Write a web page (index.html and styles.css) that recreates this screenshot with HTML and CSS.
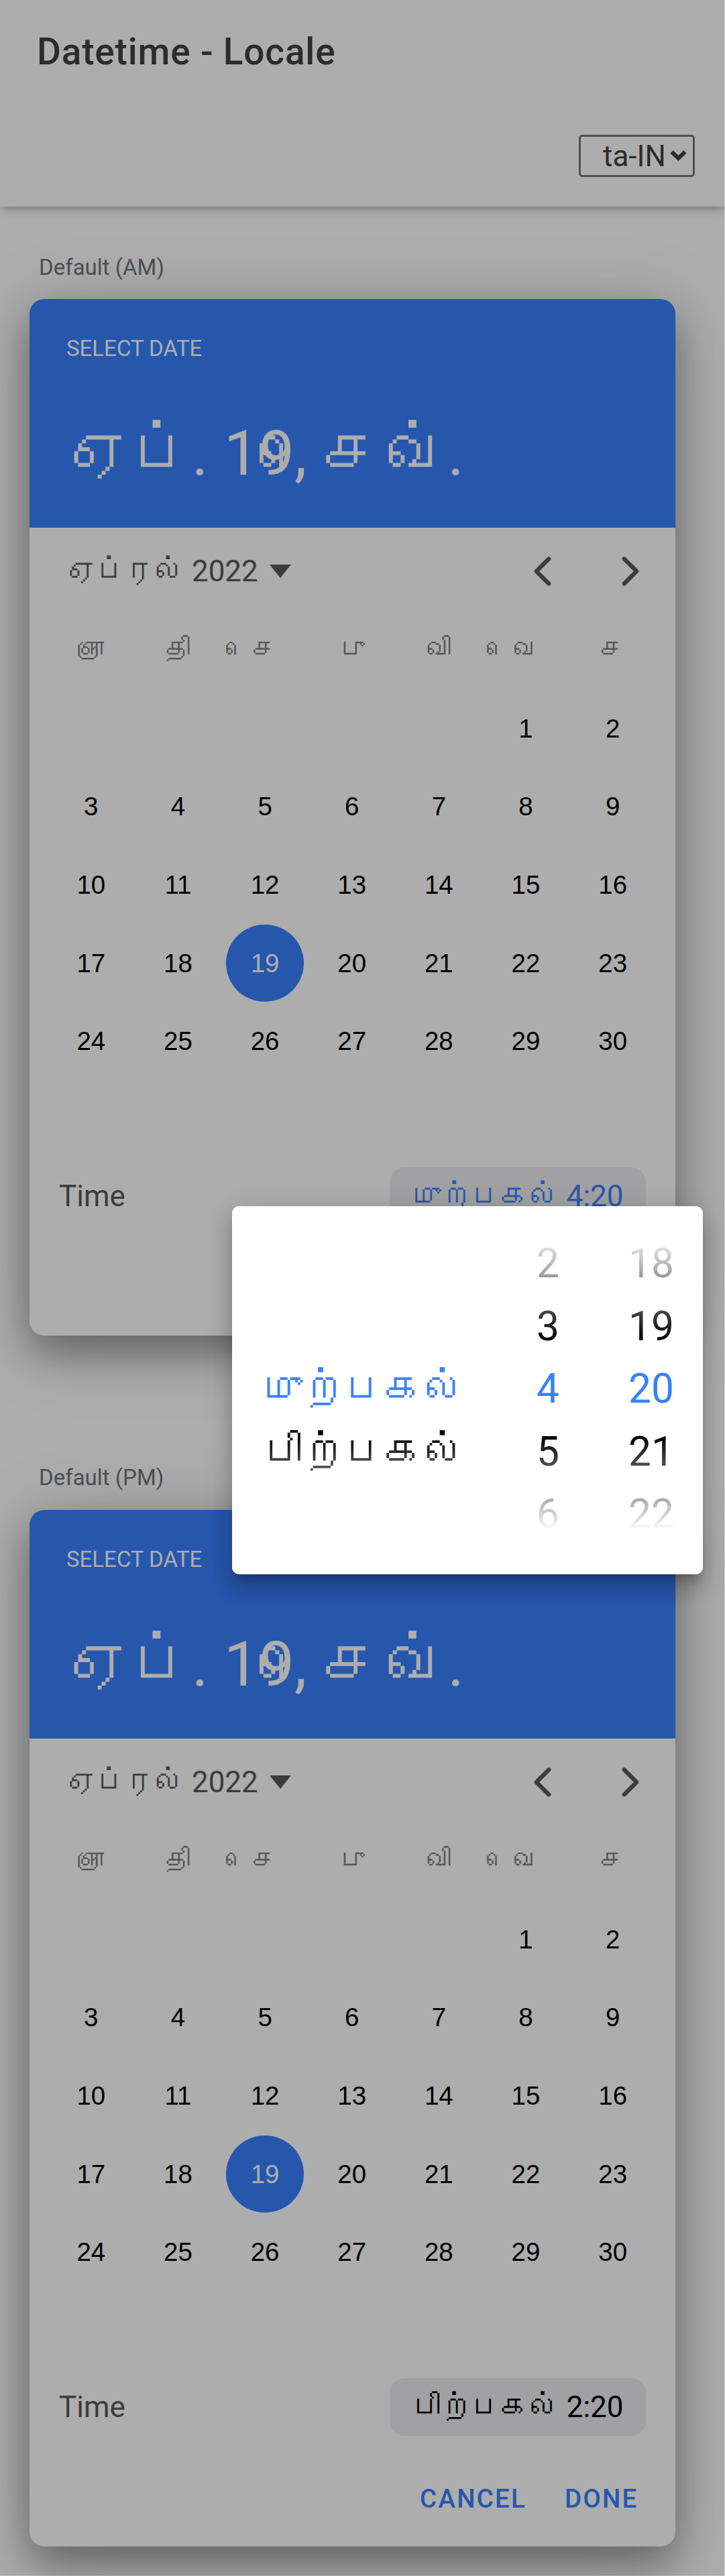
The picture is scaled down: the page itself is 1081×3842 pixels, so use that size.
FILE: index.html
```html
<!DOCTYPE html>
<html lang="ta-IN">
<head>
<meta charset="utf-8">
<title>Datetime - Locale</title>
<link rel="stylesheet" href="styles.css">
</head>
<body>
<header class="header">
  <div class="toolbar"><h1 class="title">Datetime - Locale</h1></div>
  <div class="toolbar toolbar-end">
    <div class="select"><span>ta-IN</span><svg class="select-icon" viewBox="0 0 25 17"><path d="M2.5 2.5l10 9.5L22.5 2.5" fill="none" stroke="currentColor" stroke-width="6"/></svg></div>
  </div>
</header>
<main class="content">
  <h2 class="label">Default (AM)</h2>
  <section class="datetime">
    <div class="dt-header">
      <div class="dt-title">SELECT DATE</div>
      <div class="dt-selected">ஏப். 19, <span class="sign">ெ&nbsp;</span>சவ்.</div>
    </div>
    <div class="nav">
      <div class="month"><span>ஏப்ரல் 2022</span><i class="caret"></i></div>
      <svg class="chev" viewBox="0 0 512 512"><path d="M328 112L184 256l144 144"/></svg>
      <svg class="chev" viewBox="0 0 512 512"><path d="M184 112l144 144-144 144"/></svg>
    </div>
    <div class="week"><span>ஞா</span><span>தி</span><span><b class="sign">ெ&nbsp;</b>ச</span><span>பு</span><span>வி</span><span><b class="sign">ெ&nbsp;</b>வ</span><span>ச</span></div>
    <div class="days">
      <span class="first">1</span><span>2</span>
      <span>3</span><span>4</span><span>5</span><span>6</span><span>7</span><span>8</span><span>9</span>
      <span>10</span><span>11</span><span>12</span><span>13</span><span>14</span><span>15</span><span>16</span>
      <span>17</span><span>18</span><span class="active">19</span><span>20</span><span>21</span><span>22</span><span>23</span>
      <span>24</span><span>25</span><span>26</span><span>27</span><span>28</span><span>29</span><span>30</span>
    </div>
    <div class="time"><span>Time</span><div class="time-btn on">முற்பகல் 4:20</div></div>
    <div class="actions"><span>CANCEL</span><span>DONE</span></div>
  </section>
  <h2 class="label second">Default (PM)</h2>
  <section class="datetime">
    <div class="dt-header">
      <div class="dt-title">SELECT DATE</div>
      <div class="dt-selected">ஏப். 19, <span class="sign">ெ&nbsp;</span>சவ்.</div>
    </div>
    <div class="nav">
      <div class="month"><span>ஏப்ரல் 2022</span><i class="caret"></i></div>
      <svg class="chev" viewBox="0 0 512 512"><path d="M328 112L184 256l144 144"/></svg>
      <svg class="chev" viewBox="0 0 512 512"><path d="M184 112l144 144-144 144"/></svg>
    </div>
    <div class="week"><span>ஞா</span><span>தி</span><span><b class="sign">ெ&nbsp;</b>ச</span><span>பு</span><span>வி</span><span><b class="sign">ெ&nbsp;</b>வ</span><span>ச</span></div>
    <div class="days">
      <span class="first">1</span><span>2</span>
      <span>3</span><span>4</span><span>5</span><span>6</span><span>7</span><span>8</span><span>9</span>
      <span>10</span><span>11</span><span>12</span><span>13</span><span>14</span><span>15</span><span>16</span>
      <span>17</span><span>18</span><span class="active">19</span><span>20</span><span>21</span><span>22</span><span>23</span>
      <span>24</span><span>25</span><span>26</span><span>27</span><span>28</span><span>29</span><span>30</span>
    </div>
    <div class="time"><span>Time</span><div class="time-btn">பிற்பகல் 2:20</div></div>
    <div class="actions"><span>CANCEL</span><span>DONE</span></div>
  </section>
</main>
<div class="backdrop"></div>
<div class="popover">
  <div class="col period"><span></span><span></span><span class="sel">முற்பகல்</span><span>பிற்பகல்</span><span></span></div>
  <div class="col hour"><span>2</span><span>3</span><span class="sel">4</span><span>5</span><span>6</span></div>
  <div class="col minute"><span>18</span><span>19</span><span class="sel">20</span><span>21</span><span>22</span></div>
</div>
</body>
</html>
```
FILE: styles.css
```css
* { box-sizing: border-box; }
body { margin: 0; position: relative; width: 1081px; height: 3842px; overflow: hidden; background: #fff; font-family: Roboto, Unifont, sans-serif; color: #424242; }
h1, h2 { margin: 0; }
.header { position: relative; height: 308px; background: #fff; box-shadow: 0 5px 11px -3px rgba(0,0,0,.2), 0 11px 14px rgba(0,0,0,.04), 0 3px 14px rgba(0,0,0,.1); }
.toolbar { height: 154px; padding: 0 45px 0 55px; display: flex; align-items: center; }
.toolbar-end { justify-content: flex-end; padding-top: 3px; }
.title { font-size: 55px; font-weight: 500; line-height: 1.2; letter-spacing: .8px; }
.select { display: flex; align-items: center; justify-content: space-between; width: 173px; height: 63px; padding: 0 9px 0 33px; border: 3px solid #767676; border-radius: 5px; font-size: 44px; }
.select-icon { width: 25px; height: 17px; }
.content { padding: 0 44px; }
.label { height: 138px; padding: 73px 0 0 14px; font-size: 33px; line-height: 36px; font-weight: 400; color: #6f7378; }
.label.second { height: 260px; padding-top: 194px; }
.datetime { width: 962.5px; height: 1546px; border-radius: 22px; background: #fff; box-shadow: 0 27px 55px rgba(0,0,0,.3), 0 16px 110px rgba(0,0,0,.22); display: flex; flex-direction: column; }
.dt-header { height: 341px; padding: 54px 55px 0; border-radius: 22px 22px 0 0; background: #3880ff; color: #fff; }
.dt-title { font-size: 33px; line-height: 39px; }
.dt-selected { margin-top: 82px; font-size: 93.5px; line-height: 110px; white-space: pre; }
/* vowel sign drawn on its own, ahead of its consonant */
.sign { display: inline-block; width: 0; font-weight: 400; white-space: nowrap; }
.nav { display: flex; align-items: center; height: 129px; padding: 1px 34px 0 55px; color: #595959; }
.month { flex: 1; display: flex; align-items: center; font-size: 44px; }
.month span { line-height: 52px; }
.caret { margin-left: 17px; border: 16px solid transparent; border-top: 20px solid #595959; border-bottom: 0; }
.chev { width: 66px; height: 66px; margin-left: 65px; fill: none; stroke: #595959; stroke-width: 48; stroke-linecap: round; stroke-linejoin: round; }
.week { display: grid; grid-template-columns: repeat(7, 1fr); height: 112px; padding: 0 28px 0 27px; line-height: 104px; font-size: 38.5px; color: #808080; text-align: center; }
.days { display: grid; grid-template-columns: repeat(7, 1fr); grid-auto-rows: 116.7px; padding: 0 28px 0 27px; align-items: center; justify-items: center; font-family: "Liberation Sans", sans-serif; font-size: 38.5px; color: #000; }
.days span { width: 115.5px; height: 115.5px; line-height: 115.5px; border-radius: 50%; text-align: center; }
.days .first { grid-column: 6; }
.days .active { background: #3880ff; color: #fff; }
.time { margin-top: 130px; height: 86px; display: flex; justify-content: space-between; align-items: center; padding: 0 44px; font-size: 44px; color: #595959; }
.time-btn { height: 86px; padding: 0 33px; line-height: 86px; border-radius: 22px; background: #edeef0; color: #000; }
.time-btn.on { color: #3880ff; }
.actions { display: flex; justify-content: flex-end; gap: 57px; margin-top: 70px; padding-right: 55px; font-size: 38.5px; line-height: 48px; font-weight: 500; letter-spacing: 2.2px; color: #3880ff; }
.backdrop { position: absolute; inset: 0; border: solid rgba(0,0,0,.2); border-width: 0 1px 1px 0; background: rgba(0,0,0,.32); background-clip: padding-box; }
.popover { position: absolute; left: 346px; top: 1799px; width: 702px; height: 549px; padding: 39px 42px 0 45px; border-radius: 11px; background: #fff; display: flex; box-shadow: 0 14px 14px -8px rgba(0,0,0,.2), 0 22px 28px 3px rgba(0,0,0,.14), 0 8px 39px 5px rgba(0,0,0,.12); font-size: 60.5px; color: #000; }
.popover::after { content: ""; position: absolute; inset: 0; border-radius: 11px; background: linear-gradient(#fff 43px, rgba(255,255,255,0) 199px, rgba(255,255,255,0) 344px, #fff 483px); }
.col span { display: block; height: 93.5px; line-height: 93.5px; white-space: nowrap; }
.period { width: 409px; }
.hour { width: 137px; }
.sel { color: #3880ff; }
```
